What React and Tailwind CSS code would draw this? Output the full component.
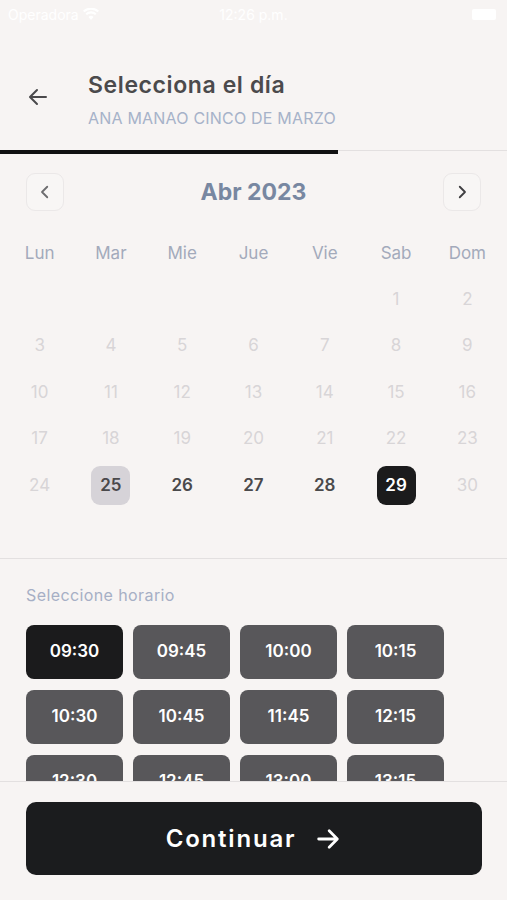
import React from "react";

const font = { fontFamily: "Inter, 'Liberation Sans', sans-serif" };

const weekdays = ["Lun", "Mar", "Mie", "Jue", "Vie", "Sab", "Dom"];
const times = ["09:30", "09:45", "10:00", "10:15", "10:30", "10:45", "11:45", "12:15", "12:30", "12:45", "13:00", "13:15", "13:30", "13:45", "14:00", "14:15"];

function Day({ d }) {
  if (!d) return <div className="h-[46.5px]" />;
  const active = d >= 25 && d <= 29;
  let inner = "text-[#d8d5d7] font-normal";
  if (d === 25) inner = "bg-[#d6d3d8] text-[#4a494b] font-semibold";
  else if (d === 29) inner = "bg-[#1b1b1c] text-white font-semibold";
  else if (active) inner = "text-[#4a494b] font-semibold";
  return (
    <div className="h-[46.5px] flex items-center justify-center">
      <div className={`w-[39px] h-[39px] rounded-[9px] flex items-center justify-center text-[17px] ${inner}`}>{d}</div>
    </div>
  );
}

export default function App() {
  const cells = [null, null, null, null, null];
  for (let i = 1; i <= 30; i++) cells.push(i);
  return (
    <div className="w-[507px] h-[900px] bg-[#f7f4f3] flex flex-col overflow-hidden" style={font}>
      {/* status bar */}
      <div className="h-[28px] flex items-center justify-between px-[8px] text-white text-[14px] relative">
        <div className="flex items-center gap-[4px]">
          <span>Operadora</span>
          <svg width="16" height="12" viewBox="0 0 16 12" fill="white"><path d="M8 12l2.5-3a3.5 3.5 0 00-5 0zM2.5 5.5a8 8 0 0111 0l-1.4 1.6a6 6 0 00-8.2 0zM0 2.8a11.5 11.5 0 0116 0l-1.4 1.5a9.5 9.5 0 00-13.2 0z"/></svg>
        </div>
        <span className="absolute left-1/2 -translate-x-1/2">12:26 p.m.</span>
        <div className="w-[24px] h-[11px] bg-white rounded-[2px] mr-[3px]" />
      </div>

      {/* header */}
      <div className="flex items-center pt-[43px] pb-[22px]">
        <div className="w-[88px] flex items-center pl-[26px] mb-[5px]">
          <svg width="24" height="24" viewBox="0 0 24 24" fill="none" stroke="#4a494b" strokeWidth="2" strokeLinecap="round" strokeLinejoin="round"><path d="M20 12H5M11 5l-7 7 7 7"/></svg>
        </div>
        <div className="flex flex-col">
          <div className="text-[23px] leading-[29px] font-semibold tracking-[0.6px] text-[#4b4a4c]">Selecciona el día</div>
          <div className="text-[16px] leading-[20px] mt-[8px] tracking-[0.2px] text-[#a6b2c9]">ANA MANAO CINCO DE MARZO</div>
        </div>
      </div>

      {/* progress */}
      <div className="relative h-[4px]">
        <div className="h-px bg-[#e3e0e0]" />
        <div className="absolute left-0 top-0 h-[4px] w-[338px] bg-[#111112]" />
      </div>

      {/* calendar */}
      <div className="pt-[19px]">
        <div className="flex items-center justify-between px-[26px]">
          <button className="w-[38px] h-[38px] rounded-[9px] border border-[#ebe8e8] bg-[#f8f6f5] flex items-center justify-center">
            <svg width="18" height="18" viewBox="0 0 24 24" fill="none" stroke="#6d6c6f" strokeWidth="2.4" strokeLinecap="round" strokeLinejoin="round"><path d="M15 5l-7 7 7 7"/></svg>
          </button>
          <div className="text-[23px] font-bold text-[#7887a1]">Abr 2023</div>
          <button className="w-[38px] h-[38px] rounded-[9px] border border-[#ebe8e8] bg-[#f8f6f5] flex items-center justify-center">
            <svg width="18" height="18" viewBox="0 0 24 24" fill="none" stroke="#3f3e41" strokeWidth="2.4" strokeLinecap="round" strokeLinejoin="round"><path d="M9 5l7 7-7 7"/></svg>
          </button>
        </div>
        <div className="grid grid-cols-7 px-[4px] mt-[30px] text-[17px] leading-[24px] text-[#a3aabb]">
          {weekdays.map((w) => (
            <div key={w} className="text-center">{w}</div>
          ))}
        </div>
        <div className="grid grid-cols-7 px-[4px] mt-[11px] pb-[49px] border-b border-[#e3e0e0]">
          {cells.map((d, i) => (
            <Day key={i} d={d} />
          ))}
        </div>
      </div>

      {/* times */}
      <div className="flex-1 overflow-hidden px-[26px] pt-[26px]">
        <div className="text-[16px] leading-[20px] tracking-[0.4px] text-[#a6afc5]">Seleccione horario</div>
        <div className="grid grid-cols-[97px_97px_97px_97px] gap-x-[10px] gap-y-[11px] mt-[20px]">
          {times.map((t, i) => (
            <div key={t} className={`h-[54px] rounded-[8px] flex items-center justify-center text-white text-[17px] font-semibold ${i === 0 ? "bg-[#1b1b1c]" : "bg-[#58575a]"}`}>{t}</div>
          ))}
        </div>
      </div>

      {/* footer */}
      <div className="h-[119px] border-t border-[#e3e0e0] px-[26px] pt-[20px] bg-[#f7f4f3]">
        <button className="w-[456px] h-[73px] rounded-[10px] bg-[#1b1c1e] flex items-center justify-center gap-[18px] text-white">
          <span className="text-[24px] font-semibold tracking-[1.8px]">Continuar</span>
          <svg width="28" height="28" viewBox="0 0 24 24" fill="none" stroke="white" strokeWidth="2.4" strokeLinecap="round" strokeLinejoin="round"><path d="M4 12h15M13 5l7 7-7 7"/></svg>
        </button>
      </div>
    </div>
  );
}
